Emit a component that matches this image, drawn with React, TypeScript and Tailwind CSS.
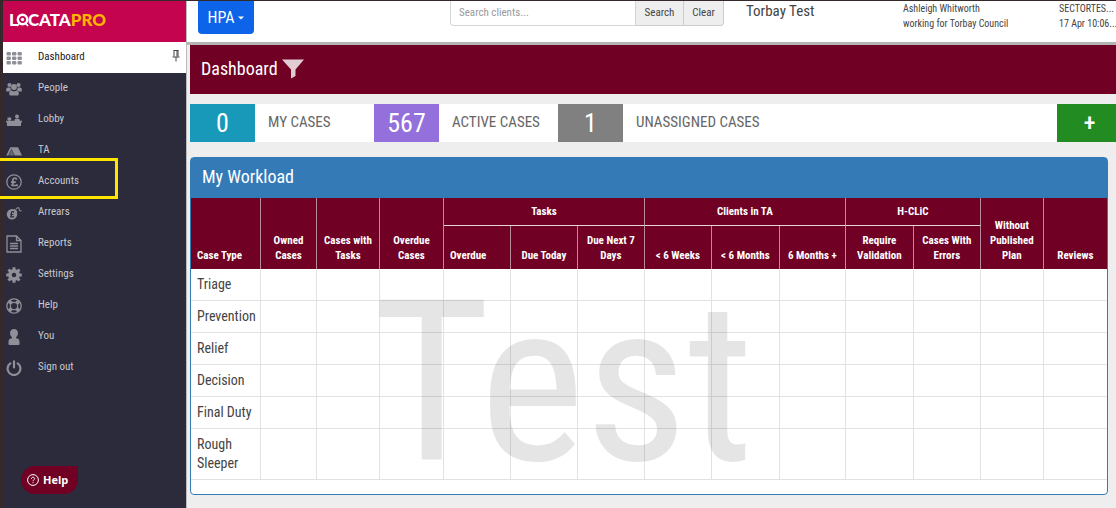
import React from 'react';

const GridIcon = () => (
  <svg className="w-4 h-4" viewBox="0 0 16 16" fill="currentColor">
    {[2, 6.5, 11].map((y) =>
      [0.5, 6, 11.5].map((x) => <rect key={`${x}-${y}`} x={x} y={y} width="4.4" height="3.600" rx="1" />)
    )}
  </svg>
);

const PeopleIcon = () => (
  <svg className="w-4 h-4" viewBox="0 0 16 16" fill="currentColor">
    <circle cx="3.500" cy="4" r="2.100" />
    <circle cx="12.500" cy="4" r="2.100" />
    <circle cx="8" cy="6" r="2.900" />
    <path d="M0.200 10 V8.500 Q0.200 6.600 2 6.600 H4.300 Q4.500 8.600 5.400 9.300 Q4 9.500 3.200 10.500 H1 Q0.200 10.500 0.200 10 Z" />
    <path d="M15.800 10 V8.500 Q15.800 6.600 14 6.600 H11.700 Q11.500 8.600 10.600 9.300 Q12 9.500 12.800 10.500 H15 Q15.800 10.500 15.800 10 Z" />
    <path d="M5.300 9.600 Q8 11.200 10.700 9.600 Q12.800 9.900 12.800 13 Q12.800 14.500 11.300 14.500 H4.700 Q3.200 14.500 3.200 13 Q3.200 9.900 5.300 9.600 Z" />
  </svg>
);

const LobbyIcon = () => (
  <svg className="w-4 h-4" viewBox="0 0 16 16" fill="currentColor">
    <circle cx="11" cy="4.500" r="2" />
    <path d="M8.300 9 Q8.300 6.800 10 6.800 H12.200 Q13.900 6.800 13.900 9 Z" />
    <path d="M1.500 5.500 H5.200 V8 H4.200 V9 H2.600 V8 H1.500 Z" />
    <path d="M0 8.800 H16 V10.500 H15 V14 H1 V10.500 H0 Z" />
  </svg>
);

const TentIcon = () => (
  <svg className="w-4 h-4" viewBox="0 0 16 16" fill="currentColor">
    <path d="M4.300 4.200 H12 L16 12.500 H8.800 L5.500 5.700 L2.300 12.500 H0.300 Z" />
    <path d="M5.500 6.600 L8.300 12.500 H2.900 Z" opacity="0.6" />
  </svg>
);

const PoundIcon = () => (
  <svg className="w-4 h-4" viewBox="0 0 16 16" fill="none" stroke="currentColor">
    <circle cx="8" cy="8" r="7.200" strokeWidth="1.300" />
    <path d="M10.700 5.700 C10.300 3.600 6.800 3.700 6.800 6.200 C6.800 8 8 10.400 5.500 11.500 H11 V10.200 M5 8.200 H9.800" strokeWidth="1.700" />
  </svg>
);

const ArrearsIcon = () => (
  <svg className="w-4 h-4" viewBox="0 0 16 16" fill="none">
    <circle cx="6" cy="9.300" r="5.200" fill="currentColor" />
    <path d="M8.500 3.800 L11.500 6.800 L10.300 8 L7.300 5 Z" fill="currentColor" />
    <path d="M10 4.500 C10.500 2.200 13 2 13.300 4.300 C13.400 5.500 14 6 15.500 5.800" stroke="currentColor" strokeWidth="1.100" />
    <path d="M7.900 7.600 C7.500 6.200 5.200 6.400 5.400 8 C5.500 9.500 6 11 4.300 11.900 H8.200 M4.200 9.500 H7.400" stroke="#2b2b3c" strokeWidth="1.200" />
  </svg>
);

const ReportIcon = () => (
  <svg className="w-4 h-[18px]" viewBox="0 0 16 18" fill="none" stroke="currentColor" strokeWidth="1.300">
    <path d="M1 1 H10.500 L15 5.500 V17 H1 Z M10.500 1 V5.500 H15 M4 8.500 H12 M4 11 H12 M4 13.500 H12" />
  </svg>
);

const GearIcon = () => (
  <svg className="w-4 h-4" viewBox="0 0 16 16" fill="none" stroke="currentColor">
    <circle cx="8" cy="8" r="4.100" strokeWidth="3.600" />
    {[0, 45, 90, 135].map((angle) => (
      <path key={angle} d="M8 0.200 V3 M8 13 V15.800" strokeWidth="3" transform={`rotate(${angle} 8 8)`} />
    ))}
  </svg>
);

const LifeRingIcon = () => (
  <svg className="w-4 h-4" viewBox="0 0 16 16" fill="none" stroke="currentColor">
    <circle cx="8" cy="8" r="7.200" strokeWidth="1.300" />
    <circle cx="8" cy="8" r="3.700" strokeWidth="1.200" />
    {[45, 135, 225, 315].map((angle) => (
      <path key={angle} d="M8 0.800 V4.300" strokeWidth="3.800" transform={`rotate(${angle} 8 8)`} />
    ))}
  </svg>
);

const PersonIcon = () => (
  <svg className="w-4 h-4" viewBox="0 0 16 16" fill="currentColor">
    <path d="M8 0 C10.500 0 12 1.700 12 4 C12 5.800 11.200 7.500 10 8.300 L10 9.300 C12.500 9.500 13.500 10.800 13.500 13 V15 Q13.500 16 12.500 16 H3.500 Q2.500 16 2.500 15 V13 C2.500 10.800 3.500 9.500 6 9.300 L6 8.300 C4.800 7.500 4 5.800 4 4 C4 1.700 5.500 0 8 0 Z" />
  </svg>
);

const PowerIcon = () => (
  <svg className="w-4 h-4" viewBox="0 0 16 16" fill="none" stroke="currentColor" strokeLinecap="round" strokeWidth="2.200">
    <path d="M4.300 3.400 A6.400 6.400 0 1 0 11.700 3.400 M8 1.300 V7.500" />
  </svg>
);

const navItems = [
  { label: 'Dashboard', icon: <GridIcon />, active: true },
  { label: 'People', icon: <PeopleIcon /> },
  { label: 'Lobby', icon: <LobbyIcon /> },
  { label: 'TA', icon: <TentIcon /> },
  { label: 'Accounts', icon: <PoundIcon />, highlighted: true },
  { label: 'Arrears', icon: <ArrearsIcon /> },
  { label: 'Reports', icon: <ReportIcon /> },
  { label: 'Settings', icon: <GearIcon /> },
  { label: 'Help', icon: <LifeRingIcon /> },
  { label: 'You', icon: <PersonIcon /> },
  { label: 'Sign out', icon: <PowerIcon /> },
];

const counters = [
  { count: 0, label: 'MY CASES', color: 'bg-[#1899ba]' },
  { count: 567, label: 'ACTIVE CASES', color: 'bg-[#9470dc]' },
  { count: 1, label: 'UNASSIGNED CASES', color: 'bg-[#808080]' },
];

const columnWidths = [70, 56, 63, 64, 67, 67, 67, 67, 68, 66, 68, 67, 63, 63];
const totalWidth = columnWidths.reduce((sum, w) => sum + w, 0);

const caseTypes = ['Triage', 'Prevention', 'Relief', 'Decision', 'Final Duty', 'Rough Sleeper'];

interface HeadCellProps {
  children: React.ReactNode;
  rowSpan?: number;
  colSpan?: number;
  left?: boolean;
}

function HeadCell({ children, rowSpan, colSpan, left }: HeadCellProps) {
  return (
    <th
      rowSpan={rowSpan}
      colSpan={colSpan}
      scope={colSpan ? 'colgroup' : 'col'}
      className={`border-r border-[#b98a9a] pb-1.5 align-bottom ${left ? 'pl-1.5 text-left' : 'px-1 text-center'} ${colSpan ? 'border-b border-b-[#e6d5da]' : ''}`}
    >
      {children}
    </th>
  );
}

function Logo() {
  return (
    <div className="flex items-center pl-1.5 h-[38px] font-[Lato] font-black text-[17px] leading-4 text-white">
      <span>L</span>
      <svg className="w-[13px] h-[14px] -ml-0.5" viewBox="0 0 13 14" fill="none" stroke="currentColor">
        <circle cx="6.500" cy="6.500" r="4.700" strokeWidth="2.400" />
        <circle cx="6.500" cy="6.500" r="1.700" fill="currentColor" stroke="none" />
        <path d="M1 13 L4 9.500 M9 9.500 L12 13" strokeWidth="1.800" />
      </svg>
      <span className="-ml-px">CATA</span>
      <span className="text-[#ffb400]">PRO</span>
    </div>
  );
}

function Sidebar() {
  return (
    <aside className="w-[183px] shrink-0 flex flex-col bg-[#2b2b3c]">
      <div className="h-[41px] bg-[#c4044f]">
        <Logo />
      </div>
      <nav>
        <ul>
          {navItems.map((item) => (
            <li key={item.label} className="relative">
              <a
                href="#"
                className={`flex items-center h-[31px] pl-[3px] text-[11px] ${item.active ? 'bg-white text-[#222]' : 'text-[#c8c8ce]'}`}
              >
                <span className="w-4 mr-4 text-[#8f8f98]">{item.icon}</span>
                <span>{item.label}</span>
                {item.active && (
                  <svg className="w-2 h-3 ml-auto mr-1.5 mb-1" viewBox="0 0 8 12" fill="none" stroke="#444">
                    <path d="M1.500 0.500 H6.500 M2 0.500 V6.500 M6 0.500 V6.500 M5 1 V6.500 M0.500 7 H7.500 M4 7 V11.500" />
                  </svg>
                )}
              </a>
              {item.highlighted && (
                <span className="absolute -left-[3px] -top-2 w-[118px] h-[41px] border-[3px] border-l-0 border-[#ffe600] pointer-events-none" />
              )}
            </li>
          ))}
        </ul>
      </nav>
      <button className="mt-auto mb-3.5 ml-[18px] w-[57px] h-7 flex items-center gap-1 pl-1.5 bg-[#700024] text-white rounded-[14px] rounded-tr-[3px] font-['Open_Sans'] font-bold text-[11px]">
        <svg className="w-3 h-3" viewBox="0 0 12 12" fill="none" stroke="currentColor">
          <circle cx="6" cy="6" r="5.400" />
          <path d="M4.400 4.800 C4.400 2.700 7.600 2.700 7.600 4.700 C7.600 5.800 6 5.800 6 7.200 M6 8.200 V9.200" />
        </svg>
        Help
      </button>
    </aside>
  );
}

function TopBar() {
  return (
    <header className="pl-[11px] bg-white border-b-[3px] border-[#b4b4b4]">
      <div className="grid grid-cols-[252fr_296fr_157fr_156fr_57fr] h-[41px] text-[#444]">
        <div>
          <button className="flex items-center justify-center gap-1 w-14 h-[33px] rounded-b bg-[#0d64e8] text-white text-[16px]">
            HPA
            <svg className="w-1.5 h-1" viewBox="0 0 6 4" fill="currentColor">
              <path d="M0 0.500 H6 L3 3.500 Z" />
            </svg>
          </button>
        </div>
        <form className="flex h-[25px] w-[274px] text-[11px]">
          <input
            type="text"
            aria-label="Search clients"
            placeholder="Search clients..."
            className="flex-1 min-w-0 pl-2 border border-t-0 border-[#d5d5d5] rounded-bl placeholder:text-[#999]"
          />
          <button type="button" className="w-12 bg-[#eee] border-b border-r border-[#ccc]">Search</button>
          <button type="button" className="w-10 bg-[#eee] border-b border-r border-[#ccc] rounded-br">Clear</button>
        </form>
        <div className="text-[15px] leading-[21px]">Torbay Test</div>
        <div className="text-[10px] leading-[15px]">
          <div>Ashleigh Whitworth</div>
          <div>working for Torbay Council</div>
        </div>
        <div className="min-w-0 text-[10px] leading-[15px] whitespace-nowrap">
          <div>SECTORTES...</div>
          <div>17 Apr 10:06...</div>
        </div>
      </div>
    </header>
  );
}

function WorkloadTable() {
  return (
    <table className="w-full table-fixed border-separate border-spacing-0">
      <colgroup>
        {columnWidths.map((w, i) => (
          <col key={i} style={{ width: `${(w / totalWidth) * 100}%` }} />
        ))}
      </colgroup>
      <thead className="bg-[#700024] text-white text-[11px] leading-[15px] font-bold">
        <tr className="h-7">
          <HeadCell rowSpan={2} left>Case Type</HeadCell>
          <HeadCell rowSpan={2}>Owned Cases</HeadCell>
          <HeadCell rowSpan={2}>Cases with Tasks</HeadCell>
          <HeadCell rowSpan={2}>Overdue Cases</HeadCell>
          <HeadCell colSpan={3}>Tasks</HeadCell>
          <HeadCell colSpan={3}>Clients in TA</HeadCell>
          <HeadCell colSpan={2}>H-CLiC</HeadCell>
          <HeadCell rowSpan={2}>Without Published Plan</HeadCell>
          <th rowSpan={2} scope="col" className="pb-1.5 align-bottom">Reviews</th>
        </tr>
        <tr className="h-[43px]">
          <HeadCell left>Overdue</HeadCell>
          <HeadCell>Due Today</HeadCell>
          <HeadCell>Due Next 7 Days</HeadCell>
          <HeadCell>&lt; 6 Weeks</HeadCell>
          <HeadCell>&lt; 6 Months</HeadCell>
          <HeadCell>6 Months +</HeadCell>
          <HeadCell>Require Validation</HeadCell>
          <HeadCell>Cases With Errors</HeadCell>
        </tr>
      </thead>
      <tbody className="text-[14px] leading-[19px] text-[#444]">
        {caseTypes.map((type) => (
          <tr key={type}>
            <th scope="row" className="pl-1.5 py-1.5 text-left align-top font-normal border-r border-b border-[#e2e2e2]">
              {type}
            </th>
            {columnWidths.slice(1).map((_, i) => (
              <td key={i} className="border-r border-b border-[#e2e2e2] last:border-r-0" />
            ))}
          </tr>
        ))}
      </tbody>
    </table>
  );
}

export default function App() {
  return (
    <div className="flex min-h-screen border-t border-l-[3px] border-[#35292c] bg-[#eee] font-['Roboto_Condensed',Roboto,sans-serif]">
      <Sidebar />
      <div className="flex-1 min-w-0 border-l border-[#bbb]">
        <TopBar />
        <main className="pl-[3px]">
          <div className="flex items-center gap-1 h-[49px] pl-[11px] pb-0.5 bg-[#700024] text-white">
            <h1 className="text-[18px]">Dashboard</h1>
            <button aria-label="Filter">
              <svg className="w-[22px] h-5" viewBox="0 0 22 20" fill="#e3cbd3">
                <path d="M0 0.500 H22 L13.500 10.500 V17 L9 19.500 V10.500 Z" />
              </svg>
            </button>
          </div>

          <div className="flex mt-2.5 h-[38px] bg-white">
            {counters.map((c) => (
              <div key={c.label} className="flex w-[184px] items-center whitespace-nowrap">
                <div className={`w-[65px] h-full shrink-0 flex items-center justify-center text-white text-[26px] ${c.color}`}>
                  {c.count}
                </div>
                <div className="pl-[13px] pb-0.5 text-[15px] text-[#666]">{c.label}</div>
              </div>
            ))}
            <button className="ml-auto w-[59px] pl-1.5 bg-[#228b22] text-white text-[24px] font-medium" aria-label="Add case">+</button>
          </div>

          <section className="relative mt-[15px] mr-2 pb-3.5 bg-white border border-[#337ab7] rounded">
            <h2 className="h-10 pl-[11px] text-[18px] leading-[38px] bg-[#337ab7] text-white">My Workload</h2>
            <WorkloadTable />
            <div className="absolute left-[182px] top-[113px] text-[225px] leading-none text-black/10 pointer-events-none select-none">
              Test
            </div>
          </section>
        </main>
      </div>
    </div>
  );
}
